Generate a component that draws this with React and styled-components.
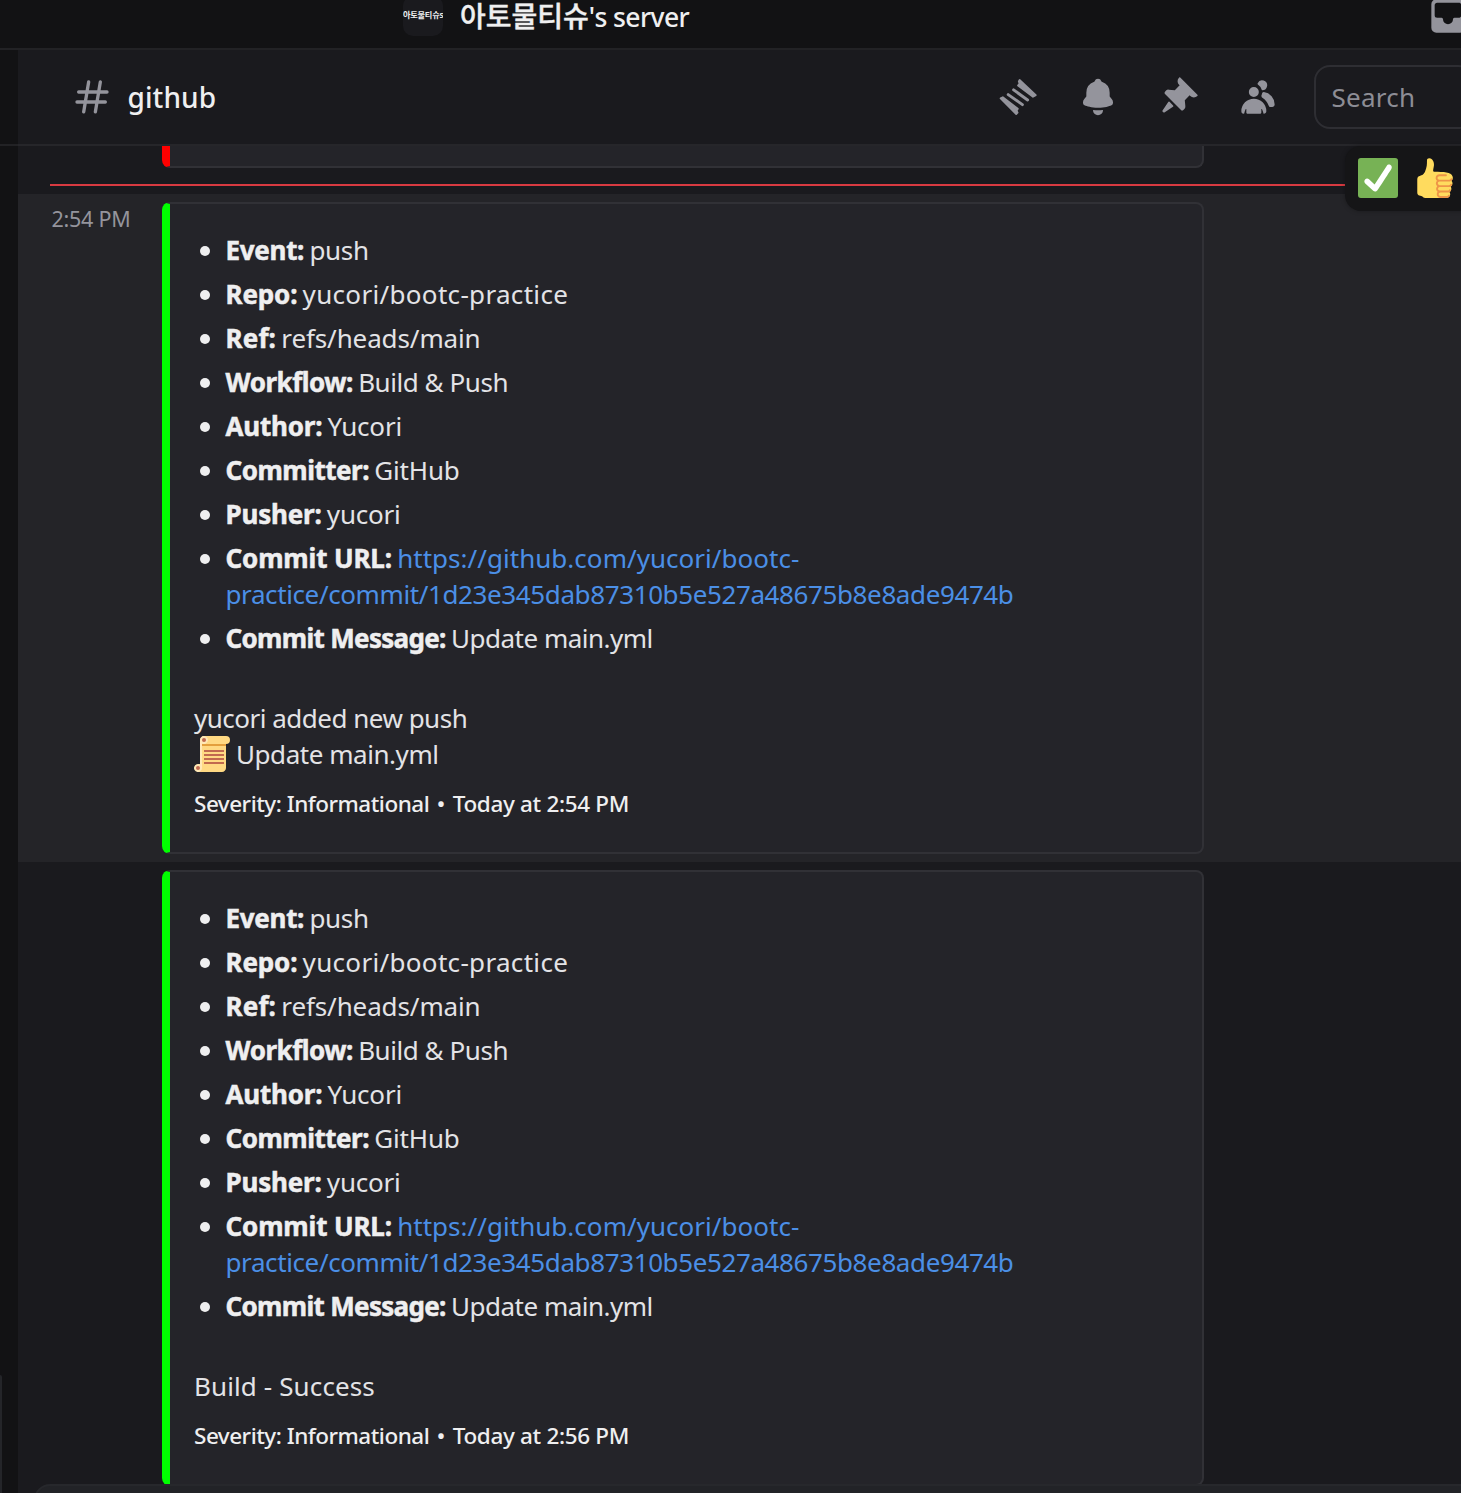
import React from 'react';
import styled, { createGlobalStyle } from 'styled-components';

const color = {
  chrome: '#121214',
  surface: '#1a1a1e',
  hover: '#242428',
  embed: '#242429',
  line: '#222225',
  edge: '#313136',
  text: '#efeff0',
  body: '#e3e3e6',
  muted: '#94949c',
  link: '#4b8fe6',
  danger: '#d83a41',
};

const Global = createGlobalStyle`
  * { box-sizing: border-box; }
  body {
    margin: 0;
    background: ${color.chrome};
    color: ${color.body};
    font-family: "Noto Sans", "Noto Sans CJK KR", sans-serif;
  }
`;

const Window = styled.div`
  display: flex;
  flex-direction: column;
  width: 1461px;
  height: 1493px;
  overflow: hidden;
  background: ${color.chrome};
`;

/* ---------- title bar ---------- */

const TitleBar = styled.header`
  display: flex;
  align-items: center;
  flex: none;
  height: 50px;
  padding: 0 0 16px 403px;
  border-bottom: 2px solid ${color.line};
`;

const ServerIcon = styled.div`
  display: flex;
  align-items: center;
  flex: none;
  width: 40px;
  height: 40px;
  padding-bottom: 2px;
  border-radius: 10px;
  overflow: hidden;
  background: ${color.surface};
  color: ${color.text};
  font-size: 8.2px;
  font-weight: 600;
  line-height: 12px;
  white-space: nowrap;
  letter-spacing: -0.25px;
`;

const ServerName = styled.h1`
  flex: 1;
  margin: 2px 0 0 17px;
  color: ${color.text};
  font-size: 26.5px;
  font-weight: 500;
  line-height: 30px;
  height: 30px;
  white-space: nowrap;
  letter-spacing: -0.6px;
`;

const Hangul = styled.span`
  font-size: 28px;
  font-weight: 500;
  line-height: 1;
  letter-spacing: 0;
  -webkit-text-stroke: 0.4px ${color.text};
`;

const InboxButton = styled.div`
  flex: none;
  width: 33px;
  height: 40px;
  overflow: hidden;
  color: ${color.muted};
`;

/* ---------- frame ---------- */

const Frame = styled.div`
  display: flex;
  flex: 1;
  min-height: 0;
`;

const Rail = styled.aside`
  display: flex;
  flex-direction: column;
  justify-content: space-between;
  flex: none;
  width: 18px;
`;

const RailHeader = styled.div`
  height: 96px;
  border-bottom: 2px solid ${color.line};
`;

const RailPanel = styled.div`
  width: 2px;
  height: 118px;
  border-top-right-radius: 2px;
  background: #242529;
`;

const Channel = styled.main`
  position: relative;
  display: flex;
  flex-direction: column;
  flex: 1;
  min-width: 0;
  background: ${color.surface};
`;

const ChannelHeader = styled.div`
  display: flex;
  align-items: center;
  flex: none;
  height: 96px;
  padding-left: 54px;
  border-bottom: 2px solid #26262a;
  color: ${color.muted};
`;

const ChannelName = styled.h2`
  flex: 1;
  margin: 0 0 0 15.5px;
  color: ${color.text};
  font-size: 28px;
  font-weight: 500;
  line-height: 40px;
  letter-spacing: 0.1px;
`;

const Toolbar = styled.div`
  display: flex;
  gap: 40px;
  margin-right: 36px;
`;

const Icon = styled.svg`
  display: block;
  flex: none;
  width: ${p => p.$size || 40}px;
  height: ${p => p.$size || 40}px;
`;

const Search = styled.div`
  flex: none;
  width: 160px;
  height: 64px;
  margin-right: -13px;
  padding: 12px 15.5px;
  border: 2px solid #2e2e33;
  border-radius: 16px;
  color: #8d8d95;
  font-size: 26px;
  line-height: 36px;
  letter-spacing: 0.25px;
`;

/* ---------- messages ---------- */

const Feed = styled.div`
  flex: 1;
  min-height: 0;
  overflow: hidden;
`;

const Divider = styled.div`
  height: 2px;
  margin: 16px 0 8px 32px;
  background: ${color.danger};
`;

const Message = styled.article`
  display: flex;
  padding: ${p => (p.$tail ? '0' : '8px 0')};
  background: ${p => (p.$active ? color.hover : 'transparent')};
`;

const Gutter = styled.div`
  flex: none;
  width: 144px;
  padding: 1px 0 0 33.5px;
  color: ${color.muted};
  font-size: 21.5px;
  line-height: 32px;
  letter-spacing: -0.25px;
  white-space: nowrap;
`;

const Embed = styled.div`
  width: 1042px;
  padding: 28px 24px 32px;
  background: ${color.embed};
  border: 2px solid ${color.edge};
  border-left: 8px solid ${p => p.$accent};
  border-radius: 8px;
`;

const EmbedTail = styled(Embed)`
  height: 22px;
  padding: 0;
  border-top: 0;
  border-radius: 0 0 8px 8px;
`;

const List = styled.ul`
  display: flex;
  flex-direction: column;
  gap: 8px;
  margin: 0 0 44px;
  padding: 0;
  list-style: none;
`;

const Item = styled.li`
  display: flex;
  font-size: 26px;
  line-height: 36px;

  &::before {
    content: '';
    flex: none;
    width: 10px;
    height: 10px;
    margin: 14px 15.5px 0 6px;
    border-radius: 50%;
    background: ${color.text};
  }
`;

const Label = styled.strong`
  margin-right: -1.5px;
  color: ${color.text};
  font-weight: 700;
  letter-spacing: ${p => p.$track - 0.05}px;
  -webkit-text-stroke: 0.5px ${color.text};
`;

const Run = styled.span`
  letter-spacing: ${p => p.$track}px;
`;

const Link = styled.a`
  color: ${color.link};
  letter-spacing: ${p => p.$track}px;
`;

const Line = styled.div`
  display: flex;
  align-items: center;
  height: 36px;
  font-size: 26px;
  line-height: 36px;
  letter-spacing: ${p => p.$track}px;
`;

const LineIcon = styled(Icon)`
  margin-right: 6px;
`;

const Footer = styled.div`
  display: flex;
  gap: 7.5px;
  margin-top: 16px;
  color: ${color.text};
  font-size: 22.5px;
  font-weight: 500;
  line-height: 32px;
`;

const Composer = styled.div`
  flex: none;
  height: 9px;
  margin-left: 16px;
  overflow: hidden;
`;

const ComposerBox = styled.div`
  height: 60px;
  margin-right: -20px;
  border: 2px solid #27282c;
  border-radius: 16px;
  background: #222327;
`;

const Reactions = styled.div`
  position: absolute;
  top: 96px;
  left: 1327px;
  display: flex;
  gap: 16px;
  width: 150px;
  height: 65px;
  padding: 12px 13px;
  border-radius: 16px;
  background: #151517;
  box-shadow: 0 0 5px rgba(0, 0, 0, 0.3);
`;

/* ---------- icons ---------- */

const Glyph = ({ d }) => (
  <Icon viewBox="0 0 24 24" fill="currentColor">
    <path fillRule="evenodd" clipRule="evenodd" d={d} />
  </Icon>
);

const HASH =
  'M10.99 3.16A1 1 0 1 0 9 2.84L8.15 8H4a1 1 0 0 0 0 2h3.82l-.67 4H3a1 1 0 1 0 0 2h3.82l-.8 4.84a1 1 0 0 0 1.97.32L8.85 16h4.97l-.8 4.84a1 1 0 0 0 1.97.32l.86-5.16H20a1 1 0 1 0 0-2h-3.82l.67-4H21a1 1 0 1 0 0-2h-3.82l.8-4.84a1 1 0 1 0-1.97-.32L15.15 8h-4.97l.8-4.84ZM14.15 14l.67-4H9.85l-.67 4h4.97Z';
const BELL =
  'M9.7 2.89c.18-.07.32-.24.37-.43a2 2 0 0 1 3.86 0c.05.2.19.36.38.43A7 7 0 0 1 19 9.5v2.09c0 .12.05.24.13.33l1.1 1.22a3 3 0 0 1 .77 2.01v.28c0 .67-.34 1.29-.95 1.56-1.31.6-4 1.51-8.05 1.51-4.05 0-6.74-.91-8.05-1.5-.61-.28-.95-.9-.95-1.57v-.28a3 3 0 0 1 .77-2l1.1-1.23a.5.5 0 0 0 .13-.33V9.5a7 7 0 0 1 4.7-6.61ZM9.18 19.84A.16.16 0 0 0 9 20a3 3 0 1 0 6 0c0-.1-.09-.17-.18-.16a24.84 24.84 0 0 1-5.64 0Z';
const PIN =
  'M19.38 11.38a3 3 0 0 0 4.24 0l.03-.03a.5.5 0 0 0 0-.7L13.35.35a.5.5 0 0 0-.7 0l-.03.03a3 3 0 0 0 0 4.24L13 5l-2.92 2.92-3.65-.34a2 2 0 0 0-1.6.58l-.62.63a1 1 0 0 0 0 1.42l9.58 9.58a1 1 0 0 0 1.42 0l.63-.63a2 2 0 0 0 .58-1.6l-.34-3.64L19 11l.38.38ZM9.07 17.07a.5.5 0 0 1-.08.77l-5.15 3.43a.5.5 0 0 1-.63-.06l-.42-.42a.5.5 0 0 1-.06-.63L6.16 15a.5.5 0 0 1 .77-.08l2.14 2.14Z';
const MEMBERS =
  'M14.5 8a3 3 0 1 0-2.7-4.3c-.2.4.06.86.44 1.12a5 5 0 0 1 2.14 3.08c.01.06.06.1.12.1ZM18.44 17.27c.15.43.54.73 1 .73h1.06c.83 0 1.5-.67 1.5-1.5a7.5 7.5 0 0 0-6.5-7.43c-.55-.08-.99.38-1.1.92-.06.3-.15.6-.26.87-.23.58-.05 1.3.47 1.63a9.53 9.53 0 0 1 3.83 4.78ZM12.5 9a3 3 0 1 1-6 0 3 3 0 0 1 6 0ZM2 20.5a7.5 7.5 0 0 1 15 0c0 .83-.67 1.5-1.5 1.5a.2.2 0 0 1-.2-.16c-.2-.96-.56-1.87-.88-2.54-.1-.23-.42-.15-.42.1v2.1a.5.5 0 0 1-.5.5h-8a.5.5 0 0 1-.5-.5v-2.1c0-.25-.31-.33-.42-.1-.32.67-.67 1.58-.88 2.54a.2.2 0 0 1-.2.16A1.5 1.5 0 0 1 2 20.5Z';
const INBOX =
  'M5 2a3 3 0 0 0-3 3v14a3 3 0 0 0 3 3h14a3 3 0 0 0 3-3V5a3 3 0 0 0-3-3H5ZM4 5.5C4 4.67 4.67 4 5.5 4h13c.83 0 1.5.67 1.5 1.5v6c0 .83-.67 1.5-1.5 1.5h-2.65c-.5 0-.85.5-.85 1a3 3 0 1 1-6 0c0-.5-.35-1-.85-1H5.5A1.5 1.5 0 0 1 4 11.5v-6Z';

const Threads = () => (
  <Icon
    viewBox="0 0 40 40"
    fill="currentColor"
    stroke="currentColor"
    strokeLinecap="round"
    strokeLinejoin="round"
  >
    <path strokeWidth="1.8" d="M21.6 3 37.8 18.2 35 19.8 20 8.6 21.6 6.6 20.8 4.4Z" />
    <path strokeWidth="1.8" d="M2.6 21.4 4.8 20.2 19.8 31.8 18.6 33.8 19.6 35.6 18.2 37Z" />
    <path strokeWidth="2.9" d="M15.6 12.9 29.6 23M10.2 17.6 24.4 27.6" />
  </Icon>
);

const Check = () => (
  <Icon viewBox="0 0 36 36">
    <rect width="36" height="36" rx="2.6" fill="#77b255" />
    <path
      fill="#fff"
      d="M29.28 6.362c-1.156-.751-2.704-.422-3.458.736L14.936 23.877l-5.029-4.65c-1.014-.938-2.596-.875-3.533.138-.937 1.014-.875 2.596.139 3.533l7.209 6.666c.48.445 1.09.665 1.696.665.673 0 1.534-.282 2.099-1.139.332-.506 12.5-19.27 12.5-19.27.751-1.159.421-2.707-.737-3.458z"
    />
  </Icon>
);

const ThumbsUp = () => (
  <Icon viewBox="0 0 36 36">
    <path
      fill="#ffdb5e"
      d="M34.956 17.916c0-.503-.12-.975-.321-1.404-1.341-4.326-7.619-4.01-16.549-4.221-1.493-.035-.639-1.798-.115-5.668.341-2.517-1.282-6.382-4.01-6.382-4.498 0-.171 3.548-4.148 12.322-2.125 4.688-6.875 2.062-6.875 6.771v10.719c0 1.833.18 3.595 2.758 3.885C8.195 34.219 7.633 36 11.238 36h18.044c1.838 0 3.333-1.496 3.333-3.334 0-.762-.267-1.456-.698-2.018 1.02-.571 1.72-1.649 1.72-2.899 0-.76-.266-1.454-.696-2.015 1.023-.57 1.725-1.649 1.725-2.901 0-.909-.368-1.733-.961-2.336.757-.611 1.251-1.535 1.251-2.581z"
    />
    <path
      fill="#ee9547"
      d="M23.02 21.249h8.604c1.17 0 2.268-.626 2.866-1.633.246-.415.109-.952-.307-1.199-.415-.247-.952-.108-1.199.307-.283.479-.806.775-1.361.775h-8.81c-.873 0-1.583-.71-1.583-1.583s.71-1.583 1.583-1.583H28.7c.483 0 .875-.392.875-.875s-.392-.875-.875-.875h-5.888c-1.838 0-3.333 1.495-3.333 3.333 0 1.025.475 1.932 1.205 2.544-.615.605-.998 1.445-.998 2.373 0 1.028.478 1.938 1.212 2.549-.611.604-.99 1.441-.99 2.367 0 1.12.559 2.108 1.409 2.713-.524.589-.852 1.356-.852 2.204 0 1.838 1.495 3.333 3.333 3.333h5.484c1.17 0 2.269-.625 2.867-1.632.247-.415.11-.952-.305-1.199-.416-.245-.953-.11-1.199.305-.285.479-.808.776-1.363.776h-5.484c-.873 0-1.583-.71-1.583-1.583s.71-1.583 1.583-1.583h6.506c1.17 0 2.27-.626 2.867-1.633.247-.416.11-.953-.305-1.199-.419-.251-.954-.11-1.199.305-.289.487-.799.777-1.363.777h-7.063c-.873 0-1.583-.711-1.583-1.584s.71-1.583 1.583-1.583h8.091c1.17 0 2.269-.625 2.867-1.632.247-.415.11-.952-.305-1.199-.417-.246-.953-.11-1.199.305-.289.486-.799.776-1.363.776H23.02c-.873 0-1.583-.71-1.583-1.583s.71-1.584 1.583-1.584z"
    />
  </Icon>
);

const Scroll = () => (
  <LineIcon $size={36} viewBox="0 0 36 36">
    <path
      fill="#ffd983"
      d="M32 0H10C7.8 0 6 1.8 6 4v24H4v8h24c2.2 0 4-1.8 4-4V8a4 4 0 0 0 0-8Z"
    />
    <path fill="#e39f3d" d="M8 8h24v2H8z" />
    <path
      fill="#ffe8b6"
      d="M10 0C7.8 0 6 1.8 6 4v24.6A4 4 0 1 0 8 32V7.5A4 4 0 1 0 10 0Z"
    />
    <g fill="#c1694f">
      <circle cx="10" cy="4" r="2" />
      <circle cx="4" cy="32" r="2" />
      <rect x="10" y="14" width="20" height="2" />
      <rect x="10" y="18" width="20" height="2" />
      <rect x="10" y="22" width="20" height="2" />
      <rect x="10" y="26" width="20" height="2" />
    </g>
  </LineIcon>
);

/* ---------- content ---------- */

const fields = [
  { label: 'Event:', lt: -0.25, value: 'push', vt: -0.3 },
  { label: 'Repo:', lt: -0.1, value: 'yucori/bootc-practice', vt: 0.32 },
  { label: 'Ref:', lt: 0.2, value: 'refs/heads/main', vt: -0.12 },
  { label: 'Workflow:', lt: -0.43, value: 'Build & Push', vt: -0.45 },
  { label: 'Author:', lt: -0.17, value: 'Yucori', vt: -0.2 },
  { label: 'Committer:', lt: -0.45, value: 'GitHub', vt: -0.15 },
  { label: 'Pusher:', lt: -0.15, value: 'yucori', vt: -0.2 },
  {
    label: 'Commit URL:',
    lt: -0.1,
    link: ['https://github.com/yucori/bootc-', 'practice/commit/1d23e345dab87310b5e527a48675b8e8ade9474b'],
  },
  { label: 'Commit Message:', lt: -0.63, value: 'Update main.yml', vt: -0.5 },
];

const FieldList = () => (
  <List>
    {fields.map(f => (
      <Item key={f.label}>
        <div>
          <Label $track={f.lt}>{f.label}</Label>{' '}
          {f.link ? (
            <>
              <Link $track={0.03}>{f.link[0]}</Link>
              <br />
              <Link $track={-0.39}>{f.link[1]}</Link>
            </>
          ) : (
            <Run $track={f.vt}>{f.value}</Run>
          )}
        </div>
      </Item>
    ))}
  </List>
);

const Severity = ({ time }) => (
  <Footer>
    <Run $track={-0.5}>Severity: Informational</Run>
    <span>•</span>
    <Run $track={-0.33}>Today at {time}</Run>
  </Footer>
);

export default function App() {
  return (
    <Window>
      <Global />
      <TitleBar>
        <ServerIcon>아토물티슈s</ServerIcon>
        <ServerName>
          <Hangul>아토물티슈</Hangul>'s server
        </ServerName>
        <InboxButton>
          <Glyph d={INBOX} />
        </InboxButton>
      </TitleBar>
      <Frame>
        <Rail>
          <RailHeader />
          <RailPanel />
        </Rail>
        <Channel>
          <ChannelHeader>
            <Glyph d={HASH} />
            <ChannelName>github</ChannelName>
            <Toolbar>
              <Threads />
              <Glyph d={BELL} />
              <Glyph d={PIN} />
              <Glyph d={MEMBERS} />
            </Toolbar>
            <Search>Search</Search>
          </ChannelHeader>
          <Feed>
            <Message $tail>
              <Gutter />
              <EmbedTail $accent="#ff0000" />
            </Message>
            <Divider />
            <Message $active>
              <Gutter>2:54 PM</Gutter>
              <Embed $accent="#00ff00">
                <FieldList />
                <Line $track={-0.5}>yucori added new push</Line>
                <Line $track={-0.45}>
                  <Scroll />
                  Update main.yml
                </Line>
                <Severity time="2:54 PM" />
              </Embed>
            </Message>
            <Message>
              <Gutter />
              <Embed $accent="#00ff00">
                <FieldList />
                <Line $track={0.12}>Build - Success</Line>
                <Severity time="2:56 PM" />
              </Embed>
            </Message>
          </Feed>
          <Composer>
            <ComposerBox />
          </Composer>
          <Reactions>
            <Check />
            <ThumbsUp />
          </Reactions>
        </Channel>
      </Frame>
    </Window>
  );
}
